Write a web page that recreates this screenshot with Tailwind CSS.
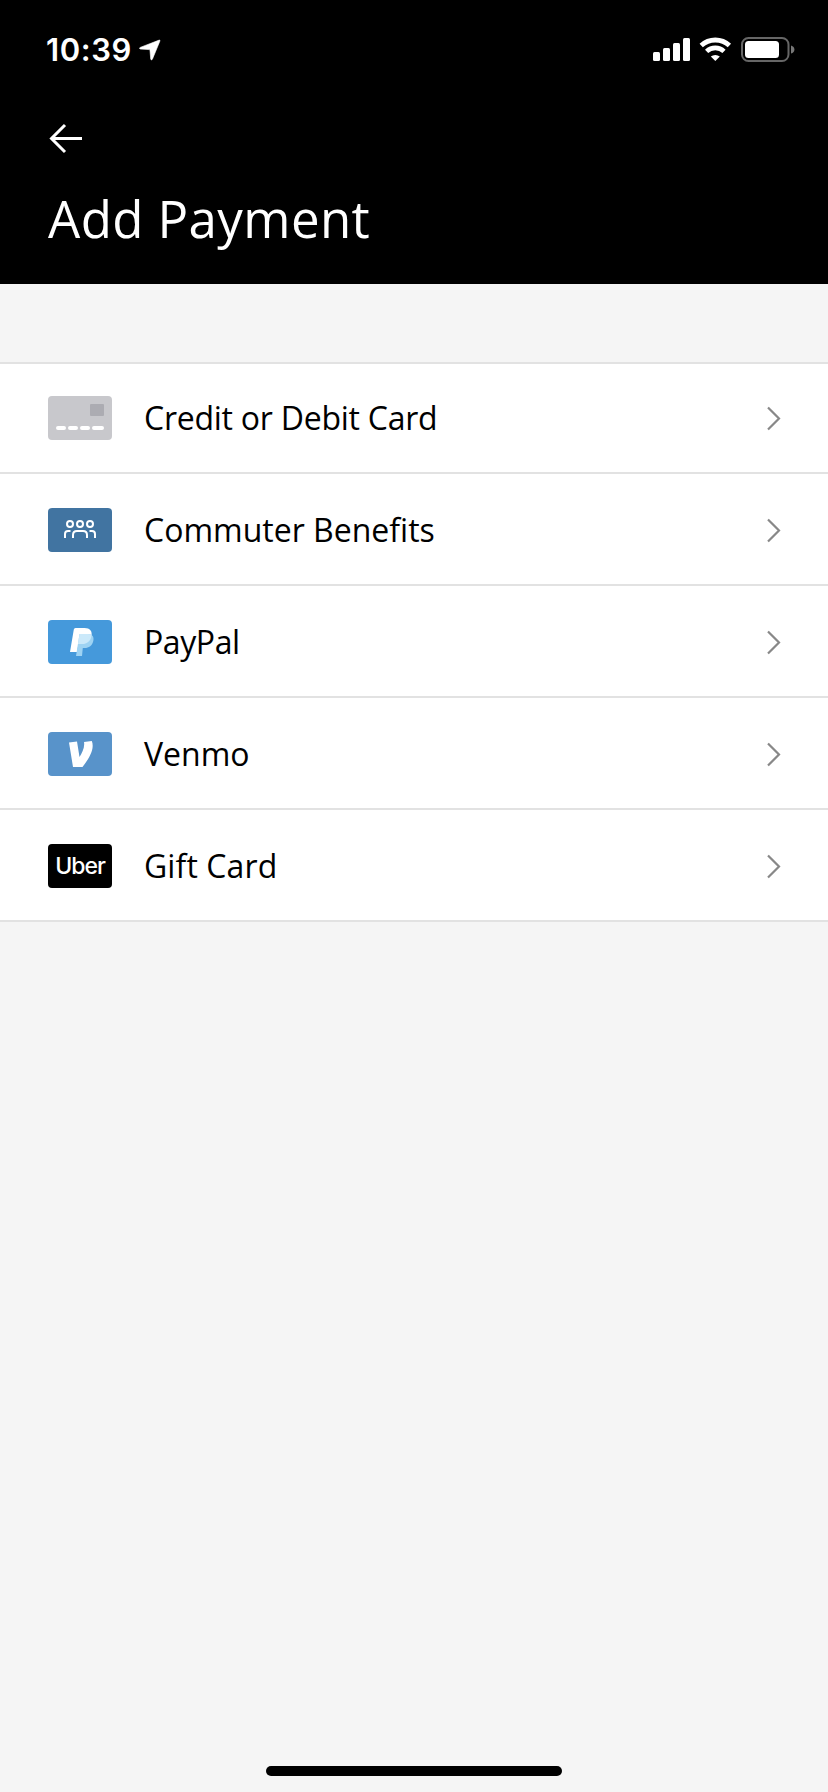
<!DOCTYPE html>
<html lang="en">
<head>
    <meta charset="UTF-8">
    <meta name="viewport" content="width=device-width, initial-scale=1.0">
    <title>Add Payment</title>
    <script src="https://cdn.jsdelivr.net/npm/@tailwindcss/browser@4"></script>
</head>
<body class="bg-[#f5f5f5] font-['Open_Sans','Noto_Sans',sans-serif]">
    <div class="flex flex-col w-[828px] h-[1792px] overflow-hidden">
        <header class="bg-black text-white h-[284px] shrink-0">
            <!-- Status bar -->
            <div class="flex justify-between h-[100px] pl-[46px] pr-[33px]">
                <div class="flex">
                    <span class="mt-[30px] w-[92px] font-['Inter',sans-serif] font-semibold text-[31px] leading-[40px] tracking-[0.6px] whitespace-nowrap">10:39</span>
                    <svg class="mt-[39px] ml-px" width="22" height="22" viewBox="0 0 22 22" fill="#fff" stroke="#fff" stroke-width=".6">
                        <path d="M20.2 1.1 1.2 8.4Q-.6 9.3 1.4 10.1L10.2 10.6Q11 10.7 11 11.5L11.7 20Q12.3 22 13.4 20.2L20.9 2Q21.3.8 20.2 1.1Z"/>
                    </svg>
                </div>
                <div class="flex pt-[36px]">
                    <svg width="38" height="28" viewBox="0 0 38 28" fill="#fff">
                        <rect x="0" y="16" width="7" height="9" rx="1.5"/>
                        <rect x="10" y="12" width="7" height="13" rx="1.5"/>
                        <rect x="20" y="7" width="7" height="18" rx="1.5"/>
                        <rect x="30" y="2" width="7" height="23" rx="1.5"/>
                    </svg>
                    <svg class="ml-2" width="33" height="28" viewBox="0 0 33 28">
                        <path d="M2.2 9.6a20.5 20.5 0 0 1 28.2 0" fill="none" stroke="#fff" stroke-width="4.8"/>
                        <path d="M7.6 15.4a12.6 12.6 0 0 1 17.4 0" fill="none" stroke="#fff" stroke-width="4.6"/>
                        <path d="M11.8 20.6a6.8 6.8 0 0 1 9 0L16.3 25Z" fill="#fff"/>
                    </svg>
                    <svg class="ml-[9px]" width="54" height="28" viewBox="0 0 54 28">
                        <rect x="1" y="2" width="46.5" height="23" rx="6.5" fill="none" stroke="#666" stroke-width="2"/>
                        <rect x="4" y="5" width="34" height="17" rx="3.5" fill="#fff"/>
                        <path d="M50 9.5q3.4 1 3.4 4t-3.4 4Z" fill="#777"/>
                    </svg>
                </div>
            </div>
            <a href="#" aria-label="Back" class="block w-9 h-8 ml-[48px] mt-[22px]">
                <svg width="36" height="32" viewBox="0 0 36 32" fill="none" stroke="#fff" stroke-width="3">
                    <path d="M34 16.5H4M17 3 3.5 16.5 17 30"/>
                </svg>
            </a>
            <h1 class="ml-[48px] mt-[29px] text-[51px] leading-[70px] font-[370] tracking-[0.4px] whitespace-nowrap">Add Payment</h1>
        </header>

        <!-- Payment methods -->
        <ul class="mt-[78px] bg-white text-black text-[32px] leading-[44px] font-[370] border-t-2 border-[#e2e2e2]">
            <li class="flex items-center h-[110px] px-[48px] border-b-2 border-[#e2e2e2]">
                <svg width="64" height="44" viewBox="0 0 64 44">
                    <rect width="64" height="44" rx="4" fill="#c8c8cc"/>
                    <rect x="42" y="8" width="14" height="12" rx="1" fill="#acacb2"/>
                    <path d="M10 32h6M22 32h6M34 32h6M46 32h8" stroke="#fff" stroke-width="4" stroke-linecap="round"/>
                </svg>
                <span class="ml-8 grow whitespace-nowrap tracking-[-0.25px]">Credit or Debit Card</span>
                <svg class="-mr-px" width="16" height="26" viewBox="0 0 16 26" fill="none" stroke="#888" stroke-width="2.2">
                    <path d="M3 2.5 14 13.5 3 24.5"/>
                </svg>
            </li>
            <li class="flex items-center h-[112px] pt-[2px] px-[48px] border-b-2 border-[#e2e2e2]">
                <svg width="64" height="44" viewBox="0 0 64 44">
                    <rect width="64" height="44" rx="4" fill="#4174a1"/>
                    <g fill="none" stroke="#fff" stroke-width="2">
                        <circle cx="22" cy="16" r="3"/>
                        <circle cx="32" cy="16" r="3"/>
                        <circle cx="42" cy="16" r="3"/>
                        <path d="M17 30v-4q0-3 3-3h2.5M25 30v-3q0-4 4-4h6q4 0 4 4v3M41.5 23H44q3 0 3 3v4"/>
                    </g>
                </svg>
                <span class="ml-8 grow whitespace-nowrap">Commuter Benefits</span>
                <svg class="-mr-px" width="16" height="26" viewBox="0 0 16 26" fill="none" stroke="#888" stroke-width="2.2">
                    <path d="M3 2.5 14 13.5 3 24.5"/>
                </svg>
            </li>
            <li class="flex items-center h-[112px] pt-[2px] px-[48px] border-b-2 border-[#e2e2e2]">
                <svg width="64" height="44" viewBox="0 0 64 44">
                    <rect width="64" height="44" rx="4" fill="#4599db"/>
                    <path d="M27.5 8H36.5C42 8 44.5 11 43.5 16C42.5 21.5 39 24 34 24H30.5L29 32H22L25.8 9.5Q26 8 27.5 8Z" fill="#fff"/>
                    <path d="M31.5 14H40C44.5 14 46.3 17 45.3 21C44.3 25.5 41 28 36.5 28H34.8L34 36H28Z" fill="#9ed3f3"/>
                    <path d="M31.5 14H40Q42.5 14 43.6 15.2C43 21 39 24 34 24H30Z" fill="#cbe9fa"/>
                </svg>
                <span class="ml-8 grow whitespace-nowrap tracking-[-0.4px]">PayPal</span>
                <svg class="-mr-px" width="16" height="26" viewBox="0 0 16 26" fill="none" stroke="#888" stroke-width="2.2">
                    <path d="M3 2.5 14 13.5 3 24.5"/>
                </svg>
            </li>
            <li class="flex items-center h-[112px] pt-[2px] px-[48px] border-b-2 border-[#e2e2e2]">
                <svg width="64" height="44" viewBox="0 0 64 44">
                    <rect width="64" height="44" rx="4" fill="#5893ca"/>
                    <path d="M21 10.5 29 9.5 31.5 25C34 21 37 15.5 36 10L43.8 9C47 17 41 26.5 34.5 35H25Z" fill="#fff"/>
                </svg>
                <span class="ml-8 grow whitespace-nowrap">Venmo</span>
                <svg class="-mr-px" width="16" height="26" viewBox="0 0 16 26" fill="none" stroke="#888" stroke-width="2.2">
                    <path d="M3 2.5 14 13.5 3 24.5"/>
                </svg>
            </li>
            <li class="flex items-center h-[112px] pt-[2px] px-[48px] border-b-2 border-[#e2e2e2]">
                <div class="flex items-center justify-center w-16 h-11 pt-px rounded-[4px] bg-black text-white font-['Inter',sans-serif] font-[450] text-[23px] leading-[43px] tracking-[-1px]">Uber</div>
                <span class="ml-8 grow whitespace-nowrap tracking-[0.1px]">Gift Card</span>
                <svg class="-mr-px" width="16" height="26" viewBox="0 0 16 26" fill="none" stroke="#888" stroke-width="2.2">
                    <path d="M3 2.5 14 13.5 3 24.5"/>
                </svg>
            </li>
        </ul>

        <!-- Home indicator -->
        <div class="mt-auto mb-4 mx-auto w-[296px] h-[10px] rounded-full bg-black"></div>
    </div>
</body>
</html>
